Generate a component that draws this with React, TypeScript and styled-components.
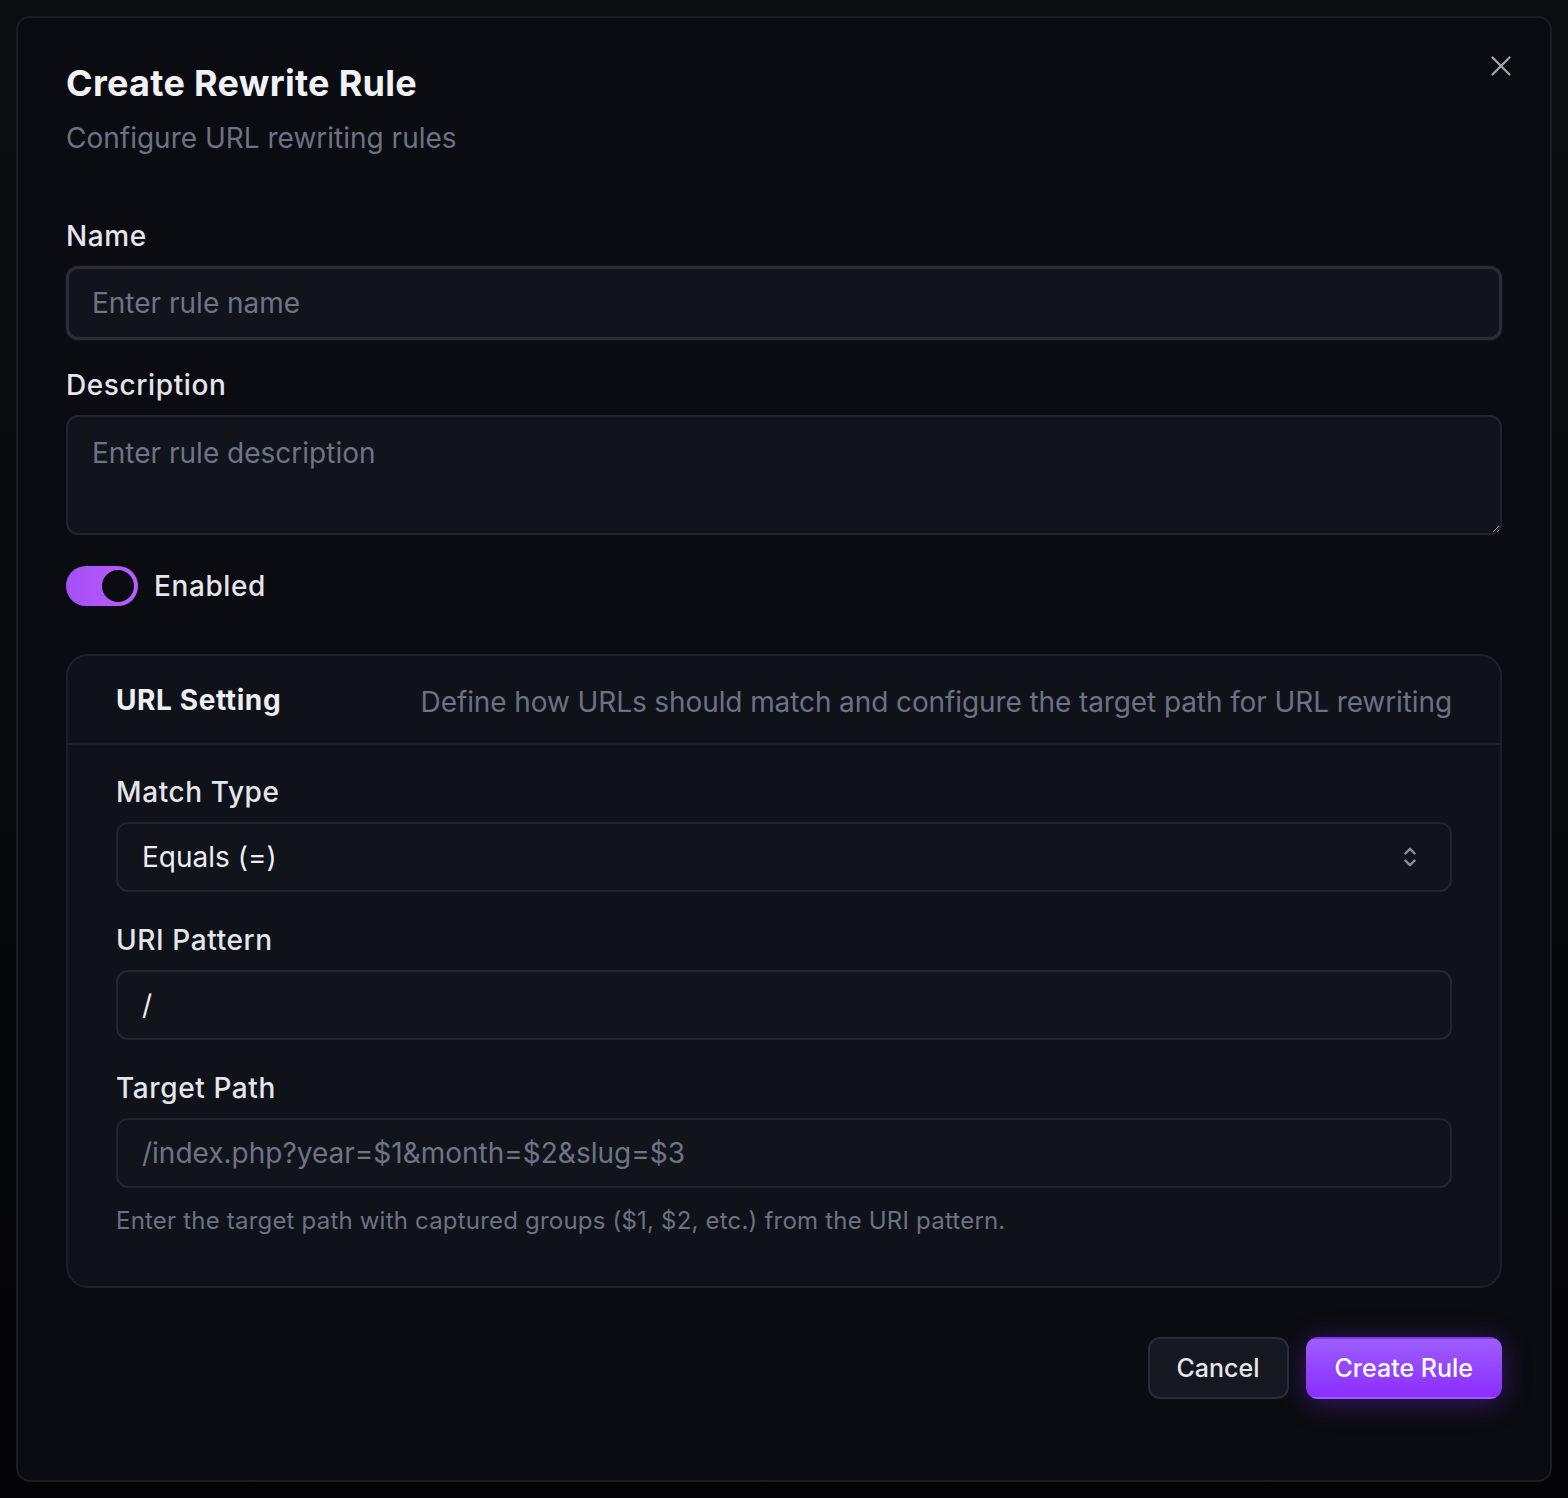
import { useState } from 'react';
import styled, { createGlobalStyle } from 'styled-components';

const C = {
  page: '#060709',
  dialog: '#0b0c11',
  dialogBorder: '#1c1d24',
  card: '#10121a',
  cardBorder: '#1f2129',
  input: '#12141c',
  inputBorder: '#23252d',
  text: '#eceef2',
  label: '#e4e6eb',
  muted: '#6c7184',
  placeholder: '#6e7386',
  purple: '#a855f7',
};

const Global = createGlobalStyle`
  * { box-sizing: border-box; }
  html, body { margin: 0; padding: 0; }
  body {
    background: linear-gradient(180deg, #0c0d11 0%, #08090c 50%, #040406 100%);
    font-family: Inter, "Noto Sans", "Liberation Sans", sans-serif;
    color: ${C.text};
    color-scheme: dark;
    -webkit-font-smoothing: antialiased;
  }
`;

const Page = styled.div`
  min-height: 1498px;
  padding: 16px;
`;

const Dialog = styled.div`
  position: relative;
  width: 1536px;
  min-height: 1466px;
  background: ${C.dialog};
  border: 2px solid ${C.dialogBorder};
  border-radius: 14px;
  padding: 43px 48px 81px 48px;
  display: flex;
  flex-direction: column;
`;

const CloseBtn = styled.button`
  position: absolute;
  top: 31px;
  right: 32px;
  width: 34px;
  height: 34px;
  padding: 0;
  border: none;
  background: transparent;
  color: #a3a6ae;
  display: flex;
  align-items: center;
  justify-content: center;
  cursor: pointer;
`;

const Title = styled.h2`
  margin: 0;
  font-size: 36px;
  line-height: 44px;
  font-weight: 650;
  letter-spacing: 0.3px;
  color: #f1f2f5;
`;

const Subtitle = styled.p`
  margin: 13px 0 0 0;
  font-size: 28px;
  line-height: 40px;
  color: ${C.muted};
`;

const Form = styled.div`
  margin-top: 58px;
  display: flex;
  flex-direction: column;
`;

const Field = styled.div<{ $gap?: number }>`
  display: flex;
  flex-direction: column;
  gap: 10px;
  margin-bottom: ${p => p.$gap ?? 25}px;
`;

const Label = styled.label`
  font-size: 28px;
  line-height: 40px;
  font-weight: 500;
  color: ${C.label};
  letter-spacing: 0.6px;
`;

const Input = styled.input<{ $h?: number; $focus?: boolean }>`
  height: ${p => p.$h ?? 70}px;
  width: 100%;
  background: ${C.input};
  border: ${p => (p.$focus ? '3px solid #2b2d35' : `2px solid ${C.inputBorder}`)};
  box-shadow: ${p => (p.$focus ? '0 0 0 1px #15161c' : 'none')};
  border-radius: 12px;
  padding: 0 ${p => (p.$focus ? 23 : 24)}px;
  font-family: inherit;
  font-size: 28px;
  color: ${C.text};
  outline: none;
  &::placeholder { color: ${C.placeholder}; }
`;

const TextArea = styled.textarea`
  height: 120px;
  width: 100%;
  background: ${C.input};
  border: 2px solid ${C.inputBorder};
  border-radius: 12px;
  padding: 16px 24px;
  font-family: inherit;
  font-size: 28px;
  line-height: 40px;
  color: ${C.text};
  outline: none;
  resize: vertical;
  &::placeholder { color: ${C.placeholder}; }
`;

const SwitchRow = styled.div`
  display: flex;
  align-items: center;
  gap: 16px;
  margin-top: 31px;
`;

const Switch = styled.button<{ $on: boolean }>`
  width: 72px;
  height: 40px;
  border-radius: 20px;
  border: none;
  padding: 4px;
  display: flex;
  justify-content: ${p => (p.$on ? 'flex-end' : 'flex-start')};
  background: ${p => (p.$on ? 'linear-gradient(90deg, #a54ff5 0%, #b95dff 100%)' : '#2a2c35')};
  cursor: pointer;
`;

const Thumb = styled.span`
  width: 32px;
  height: 32px;
  border-radius: 50%;
  background: ${C.dialog};
`;

const SwitchLabel = styled.span`
  font-size: 28px;
  font-weight: 500;
  color: ${C.label};
  letter-spacing: 0.6px;
`;

const Card = styled.section`
  margin-top: 48px;
  background: ${C.card};
  border: 2px solid ${C.cardBorder};
  border-radius: 22px;
`;

const CardHeader = styled.div`
  height: 89px;
  padding: 0 48px;
  border-bottom: 2px solid ${C.cardBorder};
  display: flex;
  align-items: center;
  justify-content: space-between;
`;

const CardTitle = styled.h3`
  margin: 0;
  font-size: 28px;
  font-weight: 700;
  color: ${C.text};
  letter-spacing: 0.6px;
`;

const CardDesc = styled.p`
  margin: 4px 0 0 0;
  font-size: 28px;
  color: ${C.muted};
  letter-spacing: -0.1px;
`;

const CardBody = styled.div`
  padding: 27px 48px 49px 48px;
  display: flex;
  flex-direction: column;
`;

const SelectBox = styled.div`
  height: 70px;
  background: ${C.input};
  border: 2px solid ${C.inputBorder};
  border-radius: 12px;
  padding: 0 26px 0 24px;
  display: flex;
  align-items: center;
  justify-content: space-between;
  font-size: 28px;
  color: ${C.text};
  cursor: pointer;
`;

const Help = styled.p`
  margin: 17px 0 0 0;
  font-size: 24px;
  line-height: 32px;
  color: ${C.muted};
  letter-spacing: 0.2px;
`;

const Footer = styled.div`
  margin-top: 49px;
  display: flex;
  justify-content: flex-end;
  gap: 17px;
`;

const Button = styled.button<{ $primary?: boolean }>`
  height: 62px;
  padding: 0 27px;
  border-radius: 12px;
  font-family: inherit;
  font-size: 25px;
  font-weight: 500;
  cursor: pointer;
  color: ${p => (p.$primary ? '#ffffff' : C.label)};
  background: ${p => (p.$primary ? 'linear-gradient(180deg, #9d5dff 0%, #8a2eff 100%)' : '#161821')};
  border: 2px solid ${p => (p.$primary ? 'transparent' : '#2a2c35')};
  box-shadow: ${p => (p.$primary ? '0 4px 28px rgba(138, 46, 255, 0.35)' : 'none')};
`;

const Chevrons = () => (
  <svg width="28" height="28" viewBox="0 0 24 24" fill="none" stroke="#8d919c" strokeWidth="2" strokeLinecap="round" strokeLinejoin="round">
    <path d="m8 15 4 4 4-4" />
    <path d="m8 9 4-4 4 4" />
  </svg>
);

export default function App() {
  const [enabled, setEnabled] = useState(true);

  return (
    <>
      <Global />
      <Page>
        <Dialog>
          <CloseBtn aria-label="Close">
            <svg width="34" height="34" viewBox="0 0 24 24" fill="none" stroke="currentColor" strokeWidth="1.6" strokeLinecap="round">
              <path d="M18 6 6 18" />
              <path d="m6 6 12 12" />
            </svg>
          </CloseBtn>

          <Title>Create Rewrite Rule</Title>
          <Subtitle>Configure URL rewriting rules</Subtitle>

          <Form>
            <Field>
              <Label>Name</Label>
              <Input $h={74} $focus placeholder="Enter rule name" />
            </Field>
            <Field $gap={0}>
              <Label>Description</Label>
              <TextArea placeholder="Enter rule description" />
            </Field>

            <SwitchRow>
              <Switch $on={enabled} onClick={() => setEnabled(!enabled)}>
                <Thumb />
              </Switch>
              <SwitchLabel>Enabled</SwitchLabel>
            </SwitchRow>

            <Card>
              <CardHeader>
                <CardTitle>URL Setting</CardTitle>
                <CardDesc>Define how URLs should match and configure the target path for URL rewriting</CardDesc>
              </CardHeader>
              <CardBody>
                <Field $gap={28}>
                  <Label>Match Type</Label>
                  <SelectBox>
                    <span>Equals (=)</span>
                    <Chevrons />
                  </SelectBox>
                </Field>
                <Field $gap={28}>
                  <Label>URI Pattern</Label>
                  <Input defaultValue="/" />
                </Field>
                <Field $gap={0}>
                  <Label>Target Path</Label>
                  <Input placeholder="/index.php?year=$1&month=$2&slug=$3" />
                </Field>
                <Help>Enter the target path with captured groups ($1, $2, etc.) from the URI pattern.</Help>
              </CardBody>
            </Card>
          </Form>

          <Footer>
            <Button>Cancel</Button>
            <Button $primary>Create Rule</Button>
          </Footer>
        </Dialog>
      </Page>
    </>
  );
}
